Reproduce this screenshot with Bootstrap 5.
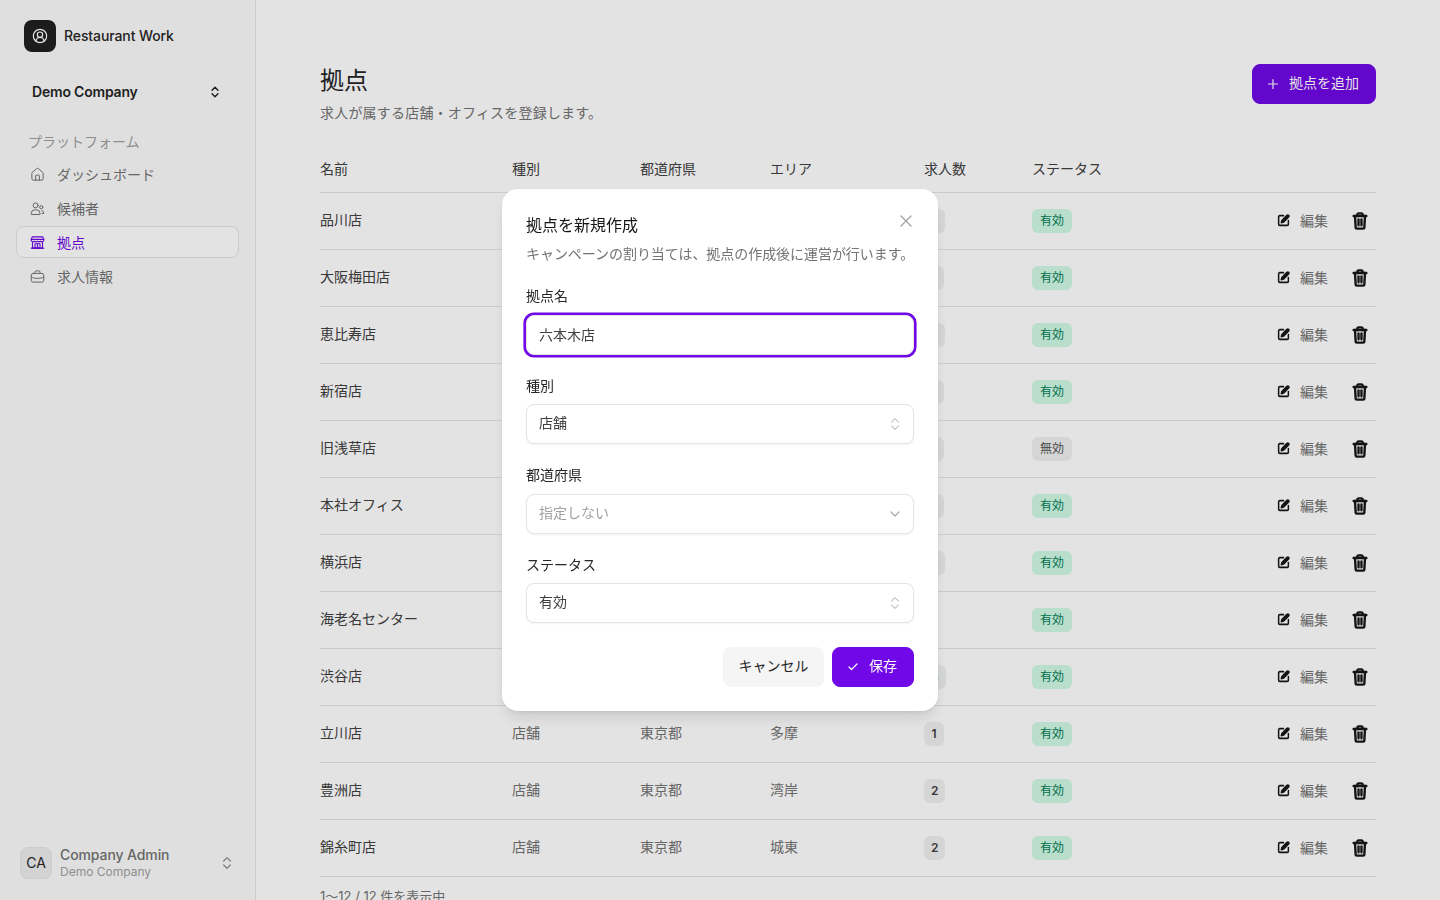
<!DOCTYPE html>
<html lang="ja">
<head>
  <meta charset="UTF-8" />
  <title>拠点</title>
  <link href="https://cdn.jsdelivr.net/npm/bootstrap@5.3.3/dist/css/bootstrap.min.css" rel="stylesheet" />
  <style>
    body {
      font-family: Inter, "Noto Sans CJK JP", sans-serif;
      font-size: 14px;
      color: #262626;
      background: #fff;
      height: 900px;
      overflow: hidden;
    }
    svg { flex: none; display: block; }

    /* sidebar */
    .side-bar { width: 256px; height: 900px; flex: none; background: #fbfbfb; border-right: 1px solid #e5e5e5; padding: 20px 16px 21px; }
    .logo-box { width: 32px; height: 32px; margin-left: 8px; border-radius: 8px; background: #202020; color: #fff; }
    .brand-name { font-size: 14px; line-height: 20px; margin-top: -1px; font-weight: 500; letter-spacing: -.1px; }
    .company-pick { margin: 24px 0 0; padding: 0 17px 0 16px; height: 32px; font-weight: 600; letter-spacing: -.2px; }
    .company-pick span { padding-bottom: 2px; }
    .side-label { margin: 24px 0 4px 12px; height: 20px; line-height: 20px; color: #a1a1a1; }
    .side-item { height: 32px; margin-top: 2px; padding: 0 13px; gap: 12px; border: 1px solid transparent; border-radius: 8px; color: #737373; text-decoration: none; }
    .side-item.is-active { background: #fff; border-color: #e5e5e5; color: #7008e7; }
    .user-avatar { width: 32px; height: 32px; margin-left: 4px; background: #ededed; border: 1px solid #e5e5e5; border-radius: 8px; color: #262626; }
    .user-name { font-size: 14px; line-height: 17px; padding-bottom: 1px; color: #737373; font-weight: 500; letter-spacing: -.1px; }
    .user-company { font-size: 12px; line-height: 15px; color: #a1a1a1; }
    .side-foot { margin-top: auto; }

    /* main */
    .main-area { padding: 64px 64px 0; min-width: 0; }
    .page-title { font-size: 24px; line-height: 34px; font-weight: 400; margin: 0; }
    .page-sub { margin: 4px 0 0; line-height: 21px; color: #737373; letter-spacing: .2px; }
    .btn-violet { --bs-btn-bg: #7008e7; --bs-btn-color: #fff; --bs-btn-border-color: #7008e7; --bs-btn-hover-bg: #7008e7; --bs-btn-hover-color: #fff; --bs-btn-font-size: 14px; --bs-btn-border-radius: 8px; height: 40px; font-weight: 400; gap: 10px; padding: 0 16px 3px 14px; }
    .btn-violet svg { margin-top: 3px; }

    .site-table { margin: 23px 0 0; table-layout: fixed; --bs-table-bg: transparent; --bs-table-color: #404040; --bs-table-border-color: #e5e5e5; }
    .site-table th { height: 46px; padding: 0; font-weight: 400; vertical-align: middle; }
    .site-table td { height: 57px; padding: 0; vertical-align: middle; }
    .site-table .cell-text { padding-bottom: 2px; }
    .site-table .cell-muted { color: #737373; }
    .count-pill { display: inline-block; min-width: 20px; height: 24px; line-height: 24px; padding: 0 7px; border-radius: 6px; background: #f0f0f0; font-size: 12px; font-weight: 600; text-align: center; }
    .status-pill { display: inline-block; width: 40px; height: 24px; line-height: 23px; border-radius: 6px; font-size: 12px; text-align: center; background: #d0fae5; color: #007a55; }
    .status-pill.is-off { background: #f0f0f0; color: #525252; }
    .row-edit { gap: 10px; color: #737373; }
    .edit-wrap { color: #171717; }
    .list-count { margin-top: 10px; font-size: 13px; color: #737373; }

    /* dialog */
    .modal-backdrop.show { opacity: .11; }
    .site-dialog { --bs-modal-width: 436px; --bs-modal-margin: 0px; }
    .site-dialog .modal-content { border: 0; border-radius: 16px; padding: 24px; box-shadow: 0 10px 15px -3px rgba(0,0,0,.1), 0 4px 6px -4px rgba(0,0,0,.1), 0 0 0 1px rgba(0,0,0,.02); }
    .dialog-title { font-size: 16px; line-height: 24px; font-weight: 400; margin: 0; color: #171717; }
    .dialog-sub { margin: 6px 0 0; line-height: 21px; font-size: 14px; color: #737373; white-space: nowrap; letter-spacing: -.05px; }
    .dialog-close { position: absolute; top: 26px; right: 26px; padding: 0; border: 0; background: none; color: #a1a1a1; }
    .field-stack { margin-top: 21.500px; gap: 20px; }
    .field-label { display: block; margin-bottom: 7.500px; line-height: 22px; color: #262626; }
    .field-box { height: 40px; padding: 0 10.500px 2px 12px; border: 1px solid #e5e5e5; border-radius: 8px; background: #fff; font-size: 14px; color: #404040; box-shadow: 0 1px 2px rgba(0,0,0,.05); }
    div.field-box { padding-bottom: 3px; }
    .field-box svg { margin-top: 3px; }
    .field-box:focus, .field-box.is-focus { border-color: #e5e5e5; box-shadow: 0 0 0 2.6px #7008e7; color: #404040; }
    .field-box .holder { color: #a1a1a1; }
    .field-icon { color: #c4c4c4; }
    .dialog-foot { margin-top: 24px; gap: 8px; }
    .btn-soft { --bs-btn-bg: #f5f5f5; --bs-btn-color: #262626; --bs-btn-border-color: #f5f5f5; --bs-btn-hover-bg: #f5f5f5; --bs-btn-font-size: 14px; --bs-btn-border-radius: 8px; height: 40px; padding: 0 14.500px 3px; }
  </style>
</head>
<body>

  <div class="d-flex">
    <!-- Sidebar -->
    <aside class="side-bar d-flex flex-column">
      <div class="d-flex align-items-center gap-2">
        <div class="logo-box d-flex align-items-center justify-content-center">
          <svg width="16" height="16" viewBox="0 0 24 24" fill="none" stroke="currentColor" stroke-width="1.8" stroke-linecap="round" stroke-linejoin="round"><circle cx="12" cy="12" r="10"/><circle cx="12" cy="10" r="4"/><path d="M18 20a6 6 0 0 0-12 0"/></svg>
        </div>
        <span class="brand-name">Restaurant Work</span>
      </div>

      <div class="company-pick d-flex align-items-center justify-content-between">
        <span>Demo Company</span>
        <svg width="14" height="14" viewBox="0 0 24 24" fill="none" stroke="currentColor" stroke-width="2.6" stroke-linecap="round" stroke-linejoin="round"><path d="m7 15 5 5 5-5"/><path d="m7 9 5-5 5 5"/></svg>
      </div>

      <div class="side-label">プラットフォーム</div>
      <a class="side-item d-flex align-items-center" href="#">
        <svg width="15" height="15" viewBox="0 0 24 24" fill="none" stroke="currentColor" stroke-width="1.6" stroke-linecap="round" stroke-linejoin="round"><path d="M15 21v-7a1 1 0 0 0-1-1h-4a1 1 0 0 0-1 1v7"/><path d="M3 10a2 2 0 0 1 .7-1.5l7-6a2 2 0 0 1 2.6 0l7 6A2 2 0 0 1 21 10v9a2 2 0 0 1-2 2H5a2 2 0 0 1-2-2z"/></svg>
        <span>ダッシュボード</span>
      </a>
      <a class="side-item d-flex align-items-center" href="#">
        <svg width="15" height="15" viewBox="0 0 24 24" fill="none" stroke="currentColor" stroke-width="1.6" stroke-linecap="round" stroke-linejoin="round"><circle cx="9" cy="7" r="4"/><path d="M2 21v-1a6 6 0 0 1 6-6h2a6 6 0 0 1 6 6v1z"/><circle cx="18" cy="10" r="2.6"/><path d="M19 15.500a4 4 0 0 1 3 3.800V20h-3"/></svg>
        <span>候補者</span>
      </a>
      <a class="side-item is-active d-flex align-items-center" href="#">
        <svg width="15" height="15" viewBox="0 0 24 24" fill="none" stroke="currentColor" stroke-width="1.8" stroke-linecap="round" stroke-linejoin="round"><path d="M2 7h20l-1.500-4h-17z"/><path d="M2 7v2a3 3 0 0 0 5 1 3.500 3.500 0 0 0 5 0 3.500 3.500 0 0 0 5 0 3 3 0 0 0 5-1V7"/><path d="M4 12v9h16v-9"/><path d="M2 21h20"/><rect x="8" y="14" width="8" height="7"/><path d="M12 14v7"/></svg>
        <span>拠点</span>
      </a>
      <a class="side-item d-flex align-items-center" href="#">
        <svg width="15" height="15" viewBox="0 0 24 24" fill="none" stroke="currentColor" stroke-width="1.6" stroke-linecap="round" stroke-linejoin="round"><path d="M8 7V5a2 2 0 0 1 2-2h4a2 2 0 0 1 2 2v2"/><rect x="2" y="7" width="20" height="14" rx="3"/><path d="M2 13c3 1.500 6.500 2 10 2s7-.5 10-2"/></svg>
        <span>求人情報</span>
      </a>

      <div class="side-foot d-flex align-items-center gap-2">
        <div class="user-avatar d-flex align-items-center justify-content-center">CA</div>
        <div class="flex-grow-1">
          <div class="user-name">Company Admin</div>
          <div class="user-company">Demo Company</div>
        </div>
        <svg class="me-1" width="16" height="16" viewBox="0 0 24 24" fill="none" stroke="#8a8a8a" stroke-width="1.8" stroke-linecap="round" stroke-linejoin="round"><path d="m7 15 5 5 5-5"/><path d="m7 9 5-5 5 5"/></svg>
      </div>
    </aside>

    <!-- Main -->
    <main class="main-area flex-grow-1">
      <div class="d-flex justify-content-between align-items-start">
        <div>
          <h1 class="page-title">拠点</h1>
          <p class="page-sub">求人が属する店舗・オフィスを登録します。</p>
        </div>
        <button type="button" class="btn btn-violet d-flex align-items-center">
          <svg width="12" height="12" viewBox="0 0 24 24" fill="none" stroke="currentColor" stroke-width="2.4" stroke-linecap="round"><path d="M12 3v18M3 12h18"/></svg>
          拠点を追加
        </button>
      </div>

      <table class="table site-table">
        <colgroup>
          <col style="width:192px" /><col style="width:128px" /><col style="width:130px" />
          <col style="width:154px" /><col style="width:108px" /><col style="width:140px" /><col />
        </colgroup>
        <thead>
          <tr><th>名前</th><th>種別</th><th>都道府県</th><th>エリア</th><th>求人数</th><th>ステータス</th><th></th></tr>
        </thead>
        <tbody id="siteRows"></tbody>
      </table>
      <div class="list-count">1〜12 / 12 件を表示中</div>
    </main>
  </div>

  <!-- New site dialog -->
  <div class="modal-backdrop show"></div>
  <div class="modal d-block" tabindex="-1">
    <div class="modal-dialog modal-dialog-centered site-dialog">
      <div class="modal-content">
        <h2 class="dialog-title">拠点を新規作成</h2>
        <p class="dialog-sub">キャンペーンの割り当ては、拠点の作成後に運営が行います。</p>
        <button type="button" class="dialog-close" aria-label="閉じる">
          <svg width="12" height="12" viewBox="0 0 12 12" fill="none" stroke="currentColor" stroke-width="1.3" stroke-linecap="round"><path d="M1 1l10 10M11 1 1 11"/></svg>
        </button>

        <div class="field-stack d-grid">
          <div>
            <label class="field-label" for="siteName">拠点名</label>
            <input id="siteName" class="form-control field-box is-focus" type="text" value="六本木店" />
          </div>
          <div>
            <span class="field-label">種別</span>
            <div class="field-box d-flex align-items-center justify-content-between">
              <span>店舗</span>
              <svg class="field-icon" width="16" height="16" viewBox="0 0 24 24" fill="none" stroke="currentColor" stroke-width="1.6" stroke-linecap="round" stroke-linejoin="round"><path d="m7 15 5 5 5-5"/><path d="m7 9 5-5 5 5"/></svg>
            </div>
          </div>
          <div>
            <span class="field-label">都道府県</span>
            <div class="field-box d-flex align-items-center justify-content-between">
              <span class="holder">指定しない</span>
              <svg class="field-icon" width="16" height="16" viewBox="0 0 24 24" fill="none" stroke="#a8a8a8" stroke-width="1.8" stroke-linecap="round" stroke-linejoin="round"><path d="m6 9 6 6 6-6"/></svg>
            </div>
          </div>
          <div>
            <span class="field-label">ステータス</span>
            <div class="field-box d-flex align-items-center justify-content-between">
              <span>有効</span>
              <svg class="field-icon" width="16" height="16" viewBox="0 0 24 24" fill="none" stroke="currentColor" stroke-width="1.6" stroke-linecap="round" stroke-linejoin="round"><path d="m7 15 5 5 5-5"/><path d="m7 9 5-5 5 5"/></svg>
            </div>
          </div>
        </div>

        <div class="dialog-foot d-flex justify-content-end">
          <button type="button" class="btn btn-soft">キャンセル</button>
          <button type="button" class="btn btn-violet d-flex align-items-center">
            <svg width="12" height="12" viewBox="0 0 24 24" fill="none" stroke="currentColor" stroke-width="2.4" stroke-linecap="round" stroke-linejoin="round"><path d="M20 6 9 17l-5-5"/></svg>
            保存
          </button>
        </div>
      </div>
    </div>
  </div>

  <script src="https://cdn.jsdelivr.net/npm/bootstrap@5.3.3/dist/js/bootstrap.bundle.min.js"></script>
  <script>
    // 海老名センター has no job count, so its pill is left out
    const sites = [
      ["品川店", "店舗", "東京都", "城南", 2, true],
      ["大阪梅田店", "店舗", "大阪府", "梅田", 1, true],
      ["恵比寿店", "店舗", "東京都", "城南", 2, true],
      ["新宿店", "店舗", "東京都", "城西", 1, true],
      ["旧浅草店", "店舗", "東京都", "城東", 1, false],
      ["本社オフィス", "オフィス", "東京都", "都心", 1, true],
      ["横浜店", "店舗", "神奈川県", "横浜", 2, true],
      ["海老名センター", "センター", "神奈川県", "県央", 0, true],
      ["渋谷店", "店舗", "東京都", "城西", 3, true],
      ["立川店", "店舗", "東京都", "多摩", 1, true],
      ["豊洲店", "店舗", "東京都", "湾岸", 2, true],
      ["錦糸町店", "店舗", "東京都", "城東", 2, true]
    ];

    const editIcon = `<svg width="13" height="13" viewBox="0 0 24 24" fill="none" stroke="currentColor" stroke-width="2.8" stroke-linecap="round" stroke-linejoin="round"><path d="M12 3H5a2 2 0 0 0-2 2v14a2 2 0 0 0 2 2h14a2 2 0 0 0 2-2v-7"/><path d="M18.400 2.600a2.100 2.100 0 0 1 3 3L12 15l-4 1 1-4z" fill="currentColor"/></svg>`;
    const trashIcon = `<svg width="16" height="18" viewBox="0 0 24 27" fill="none" stroke="currentColor" stroke-width="3.600" stroke-linecap="round" stroke-linejoin="round"><path d="M2.500 6h19"/><path d="M8 6V4a2 2 0 0 1 2-2h4a2 2 0 0 1 2 2v2"/><path d="M4.500 6l1 17a2 2 0 0 0 2 2h9a2 2 0 0 0 2-2l1-17"/><path d="M9.800 11v9M14.200 11v9"/></svg>`;

    // Render site rows
    document.getElementById("siteRows").innerHTML = sites
      .map(s => `
        <tr>
          <td class="cell-text">${s[0]}</td>
          <td class="cell-text cell-muted">${s[1]}</td>
          <td class="cell-text cell-muted">${s[2]}</td>
          <td class="cell-text cell-muted">${s[3]}</td>
          <td>${s[4] ? `<span class="count-pill">${s[4]}</span>` : ""}</td>
          <td><span class="status-pill ${s[5] ? "" : "is-off"}">${s[5] ? "有効" : "無効"}</span></td>
          <td>
            <div class="d-flex justify-content-end align-items-center">
              <span class="row-edit d-flex align-items-center"><span class="edit-wrap">${editIcon}</span>編集</span>
              <span class="edit-wrap ms-4 me-2">${trashIcon}</span>
            </div>
          </td>
        </tr>`)
      .join("");
  </script>
</body>
</html>
